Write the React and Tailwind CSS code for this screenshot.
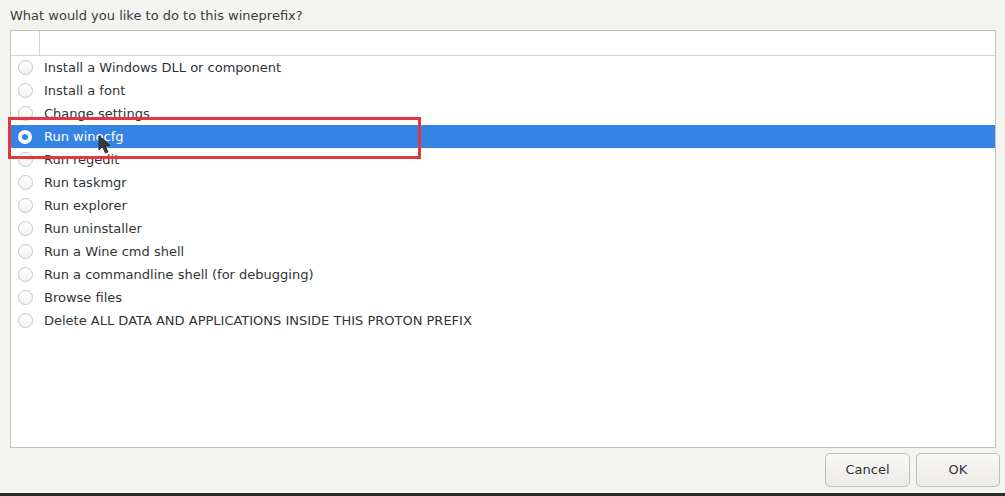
import React from 'react';

const items = [
  'Install a Windows DLL or component',
  'Install a font',
  'Change settings',
  'Run winecfg',
  'Run regedit',
  'Run taskmgr',
  'Run explorer',
  'Run uninstaller',
  'Run a Wine cmd shell',
  'Run a commandline shell (for debugging)',
  'Browse files',
  'Delete ALL DATA AND APPLICATIONS INSIDE THIS PROTON PREFIX',
];

function Radio({ checked }) {
  if (checked) {
    return (
      <span className="w-[14px] h-[14px] rounded-full bg-white flex items-center justify-center">
        <span className="w-[6px] h-[6px] rounded-full bg-[#3584e4]" />
      </span>
    );
  }
  return <span className="w-[15px] h-[15px] rounded-full border border-[#c8c5c1] bg-gradient-to-b from-white to-[#f4f3f1]" />;
}

export default function App() {
  return (
    <div className="w-[1005px] h-[496px] bg-[#f3f3f0] flex flex-col font-['DejaVu_Sans',sans-serif] text-[13px] text-[#2e3436] overflow-hidden">
      <div className="h-[30px] pl-[10px] pt-[6px] text-[#3b3b3b]">What would you like to do to this wineprefix?</div>
      <div className="relative ml-[10px] w-[986px] h-[418px] border border-[#c6c2bd] bg-white">
        <div className="flex h-[25px] border-b border-[#d6d2cd]">
          <div className="w-[29px] border-r border-[#d6d2cd]" />
        </div>
        {items.map((label, i) => {
          const sel = i === 3;
          return (
            <div
              key={label}
              className={`flex items-center h-[23px] ${sel ? 'bg-[#3584e4] text-white' : ''}`}
            >
              <div className="w-[28px] flex justify-center">
                <Radio checked={sel} />
              </div>
              <span className="ml-[5px] whitespace-nowrap">{label}</span>
            </div>
          );
        })}
        <div className="absolute left-[-3px] top-[86px] w-[413px] h-[42px] border-[3px] border-[#e1383f]" />
        <svg className="absolute left-[87px] top-[104px]" width="14" height="20" viewBox="0 0 14 20">
          <path d="M1 1 L1 15 L4.5 11.5 L7.5 18 L10 17 L7 10.5 L12 10.5 Z" fill="#3c3c3c" stroke="#2a2a2a" strokeWidth="1" />
        </svg>
      </div>
      <div className="flex justify-end gap-[6px] pr-[5px] pt-[5px]">
        <button className="w-[85px] h-[34px] rounded-[5px] border border-[#c0bdb9] bg-gradient-to-b from-[#f8f8f7] to-[#eceae7] text-[#2e3436]">Cancel</button>
        <button className="w-[84px] h-[34px] rounded-[5px] border border-[#c0bdb9] bg-gradient-to-b from-[#f8f8f7] to-[#eceae7] text-[#2e3436]">OK</button>
      </div>
      <div className="flex-1" />
      <div className="h-[3px] bg-[#2b2b2b]" />
    </div>
  );
}
